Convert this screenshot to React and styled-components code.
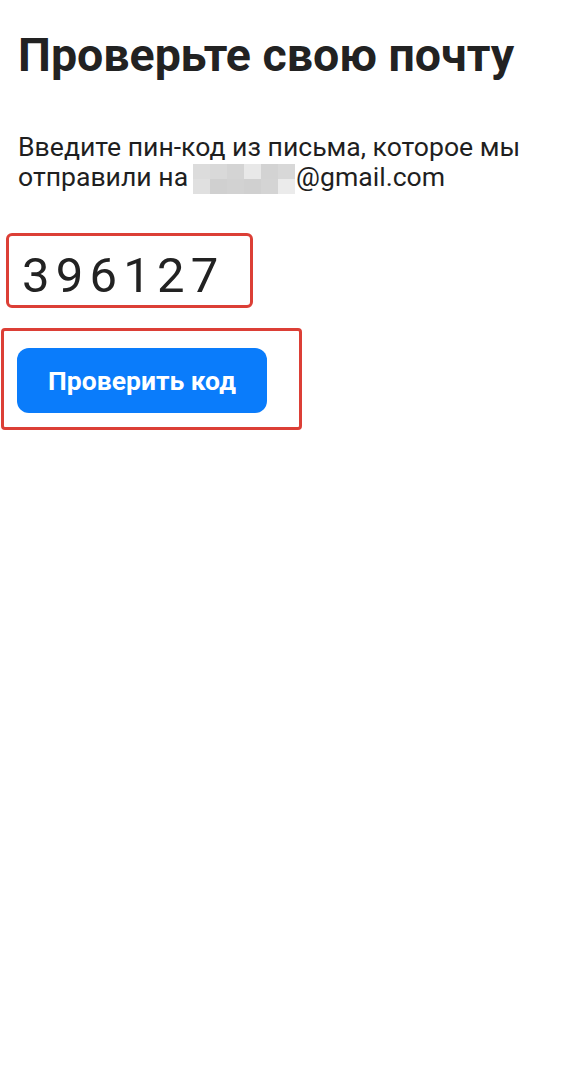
import React from "react";
import styled, { createGlobalStyle } from "styled-components";

const Global = createGlobalStyle`
  html, body { margin: 0; padding: 0; background: #ffffff; }
  body { font-family: Roboto, "Noto Sans", sans-serif; color: #1f1f1f; }
`;

const Page = styled.div`
  width: 579px;
  min-height: 1074px;
  box-sizing: border-box;
  padding: 27px 0 0 18px;
  display: flex;
  flex-direction: column;
  align-items: flex-start;
`;

const Title = styled.h1`
  margin: 0;
  font-size: 46.5px;
  line-height: 56px;
  font-weight: 700;
  color: #222222;
  letter-spacing: 0;
  white-space: nowrap;
`;

const Lead = styled.p`
  margin: 49px 0 0;
  font-size: 26.6px;
  line-height: 30px;
  font-weight: 400;
  color: #1f1f1f;
  white-space: nowrap;
`;

const Masked = styled.span`
  display: inline-grid;
  grid-template-columns: repeat(6, 17px);
  grid-template-rows: 15px 15px;
  vertical-align: top;
  margin: 2px 1px 0 5px;
`;

const Cell = styled.span`
  background: ${(p) => p.$c};
`;

const Annotation = styled.div`
  border: 3px solid #dc3f36;
  border-radius: ${(p) => p.$r || 5}px;
  box-sizing: border-box;
`;

const CodeBox = styled(Annotation)`
  margin: 39px 0 0 -12px;
  width: 247px;
  height: 75px;
  padding: 11px 0 0 13px;
  font-size: 49px;
  line-height: 57px;
  letter-spacing: 6.2px;
  color: #222222;
  font-weight: 400;
`;

const ButtonFrame = styled(Annotation)`
  margin: 20px 0 0 -17px;
  padding: 17px 32px 14px 13px;
`;

const VerifyButton = styled.button`
  width: 250px;
  height: 65px;
  border: none;
  border-radius: 12px;
  background: #0a7cfb;
  color: #ffffff;
  font-family: Roboto, "Noto Sans", sans-serif;
  font-size: 26.5px;
  font-weight: 700;
  display: flex;
  align-items: center;
  justify-content: center;
  padding: 0;
`;

const blocks = [
  "#dcdcdc", "#d9d9d9", "#d4d4d4", "#e8e8e8", "#d3d3d3", "#d8d8d8",
  "#e0e0e0", "#d0d0d0", "#d2d2d2", "#d0d0d0", "#d4d4d4", "#ebebeb",
];

export default function App() {
  return (
    <>
      <Global />
      <Page>
        <Title>Проверьте свою почту</Title>
        <Lead>
          Введите пин-код из письма, которое мы
          <br />
          отправили на
          <Masked>
            {blocks.map((c, i) => (
              <Cell key={i} $c={c} />
            ))}
          </Masked>
          @gmail.com
        </Lead>
        <CodeBox $r={6}>396127</CodeBox>
        <ButtonFrame $r={4}>
          <VerifyButton>Проверить код</VerifyButton>
        </ButtonFrame>
      </Page>
    </>
  );
}
